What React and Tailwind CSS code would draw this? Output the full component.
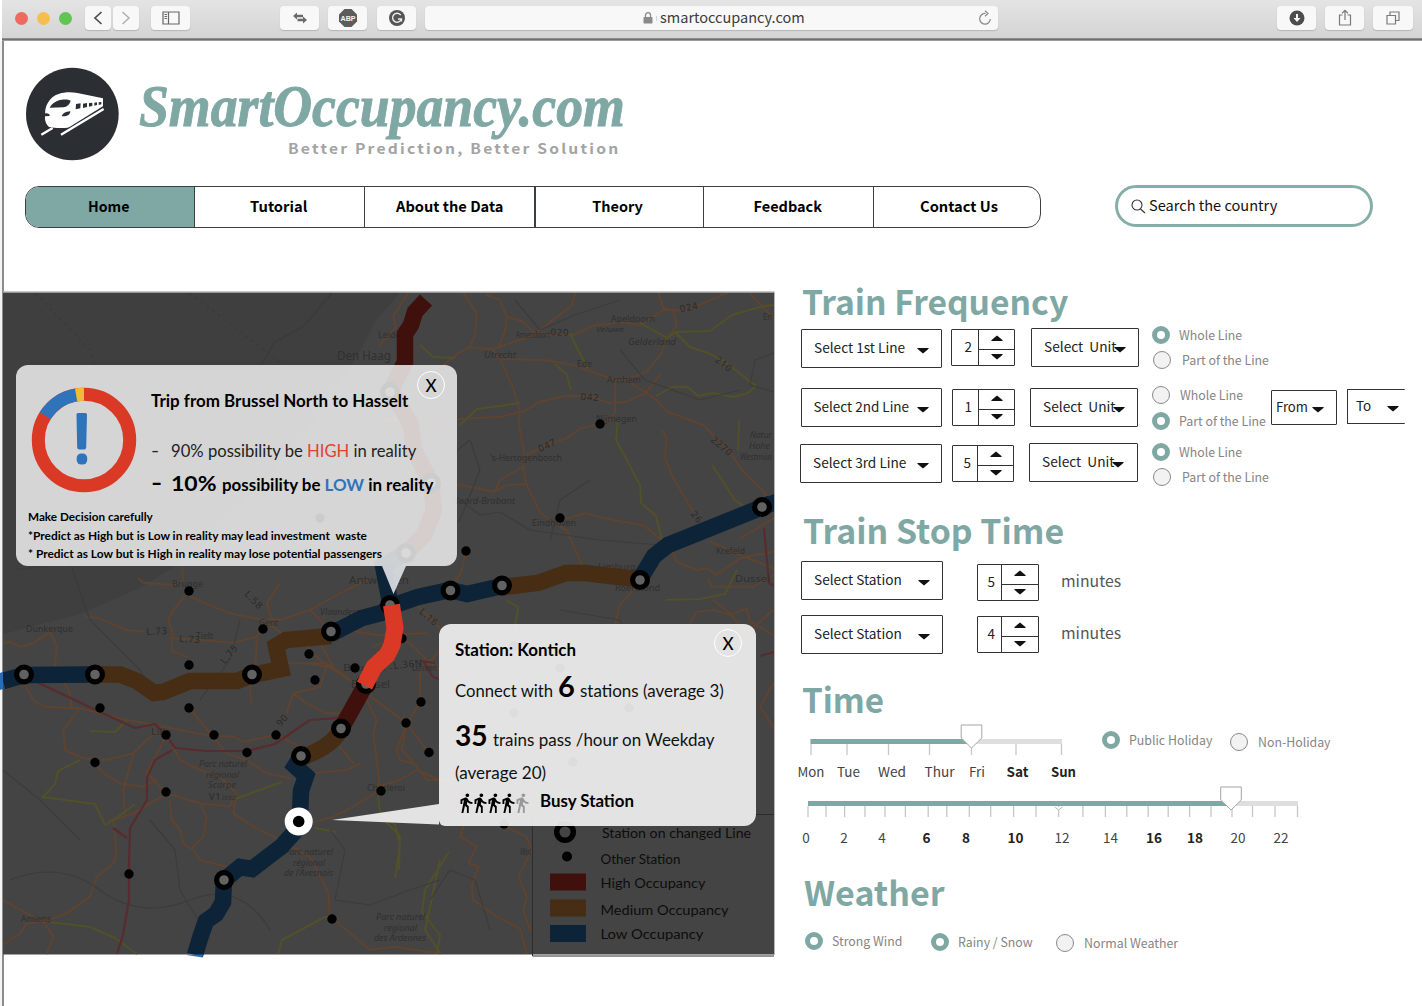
import React, { useLayoutEffect, useRef } from "react";
import { MdDirectionsWalk } from "react-icons/md";

const SOURCE = "font-['Noto_Sans_CJK_SC','Noto_Sans',sans-serif]";

/* Text stretched or squeezed horizontally to a given width */
function Fit({ w, className = "", children }) {
  const ref = useRef(null);
  useLayoutEffect(() => {
    const el = ref.current;
    el.style.transform = "none";
    el.style.transform = `scaleX(${w / el.offsetWidth})`;
  }, [w]);
  return (
    <span className={`inline-block whitespace-pre ${className}`} style={{ width: w }}>
      <span ref={ref} className="inline-block origin-left whitespace-pre">{children}</span>
    </span>
  );
}

function BarButton({ className, children }) {
  return (
    <div className={`flex h-[24px] shrink-0 items-center rounded-[4px] bg-[#f8f8f8] shadow-[0_1px_1px_rgba(0,0,0,0.16)] ${className}`}>
      {children}
    </div>
  );
}

function BrowserBar() {
  return (
    <div className="h-[41px] pl-[2px]">
      <div className="flex h-[38px] items-start bg-gradient-to-b from-[#e4e4e4] to-[#d4d4d4] pt-[6px] pl-[13px]">
        <div className="mt-[6px] flex gap-[9px]">
          <span className="size-[13px] rounded-full bg-[#ed6a5e]" />
          <span className="size-[13px] rounded-full bg-[#f5bf4f]" />
          <span className="size-[13px] rounded-full bg-[#61c554]" />
        </div>
        <BarButton className="ml-[13px] w-[26px] justify-center">
          <svg width="10" height="14" fill="none" stroke="#4d4d4d" strokeWidth="1.7"><path d="M8.500 1L2 7l6.500 6" /></svg>
        </BarButton>
        <BarButton className="ml-[2px] w-[26px] justify-center">
          <svg width="10" height="14" fill="none" stroke="#b0b0b0" strokeWidth="1.500"><path d="M1.500 1L8 7l-6.500 6" /></svg>
        </BarButton>
        <BarButton className="ml-[12px] w-[39px] justify-center">
          <svg width="18" height="14" fill="none" stroke="#666" strokeWidth="1.200"><path d="M1 1h16v12H1zM6.500 1v12M2.500 3.500h2.500M2.500 5.500h2.500M2.500 7.500h2.500" /></svg>
        </BarButton>
        <BarButton className="ml-[90px] w-[39px] justify-center">
          <svg width="16" height="12" fill="#6a6a6a"><path d="M1 4l4-3.500v2.200h6v2.600H5v2.200zM15 8l-4-3.500v2.200H5.500v2.600H11v2.200z" /></svg>
        </BarButton>
        <BarButton className="ml-[9px] w-[39px] justify-center">
          <svg width="18" height="18">
            <path d="M5.500 0h7L18 5.500v7L12.500 18h-7L0 12.500v-7z" fill="#5c5c5c" />
            <text x="9" y="12" textAnchor="middle" textLength="15" lengthAdjust="spacingAndGlyphs" fontSize="8" fontWeight="700" fontFamily="Liberation Sans, sans-serif" fill="#f5f5f5">ABP</text>
          </svg>
        </BarButton>
        <BarButton className="ml-[10px] w-[39px] justify-center">
          <svg width="16" height="16" fill="none">
            <circle cx="8" cy="8" r="8" fill="#555" />
            <path d="M11.800 5.200A4.500 4.500 0 1 0 12.400 9H9M12.400 9v2.500" stroke="#eee" strokeWidth="1.400" />
          </svg>
        </BarButton>
        <BarButton className="ml-[9px] w-[573px] pl-[218px]">
          <svg className="shrink-0" width="10" height="12"><rect x="0.500" y="5" width="9" height="6.500" rx="0.800" fill="#8a8a8a" /><path d="M2.500 5V3.200a2.500 2.500 0 0 1 5 0V5" fill="none" stroke="#8a8a8a" strokeWidth="1.300" /></svg>
          <span className="ml-[3px] h-[5px] w-px bg-gray-300" />
          <Fit w={145} className={`mb-[2px] ml-[3px] text-[14px] leading-[22px] text-[#3c3c3c] ${SOURCE}`}>smartoccupancy.com</Fit>
          <svg className="ml-[173px] shrink-0" width="14" height="16" fill="none" stroke="#888" strokeWidth="1.200"><path d="M7.500 3.500A5.300 5.300 0 1 0 12.300 9M7 0.800l3 2.700-3 2.700" /></svg>
        </BarButton>
        <BarButton className="ml-[279px] w-[39px] justify-center">
          <svg width="16" height="16"><circle cx="8" cy="8" r="7.500" fill="#4d4d4d" /><path d="M7 4h2v4h2.500L8 12 4.500 8H7z" fill="#f5f5f5" /></svg>
        </BarButton>
        <BarButton className="ml-[9px] w-[39px] justify-center">
          <svg width="14" height="18" fill="none" stroke="#7a7a7a" strokeWidth="1.200"><path d="M4.500 6H1.500v10h11V6h-3M7 11V1.500M4 4.300l3-3 3 3" /></svg>
        </BarButton>
        <BarButton className="ml-[9px] w-[40px] justify-center">
          <svg width="14" height="14" fill="none" stroke="#7a7a7a" strokeWidth="1.200"><path d="M1 4.500h8.500V13H1zM4 4.500V1h9v8.500H9.500" /></svg>
        </BarButton>
      </div>
      <div className="h-[3px] border-t border-b border-t-[#8d8d8d] border-b-[#9c9c9c] bg-[#707070]" />
    </div>
  );
}

function TrainLogo() {
  return (
    <svg className="shrink-0" width="94" height="94" viewBox="78 202 282 282">
      <circle cx="217" cy="343" r="139" fill="#2b2e33" />
      <path d="M136 346C132 322 148 290 178 282C192 277 214 276 232 280L309 296V321L220 381C200 387 160 385 147 382C137 374 134 360 135 350L148 349C152 346 146 341 136 341Z" fill="#fff" />
      <path d="M149 324C156 311 168 302 186 300C197 299 207 300 212 303C208 315 202 321 190 323ZM185 350C188 342 196 336 211 335C211 345 202 351 185 350Z" fill="#2b2e33" />
      <path d="M228 313l14-2-1 15-14 3zM249 312l12-2v12l-12 3zM267 310l10-1v10l-10 2zM283 309l8-1v8l-8 2zM296 308l8-1v7l-8 2z" fill="#2b2e33" />
      <path d="M200 390L312 320" stroke="#2b2e33" strokeWidth="4" />
      <path d="M124 405l34-20M183 405l128-77" stroke="#fff" strokeWidth="7" />
    </svg>
  );
}

const NAV = [
  ["Home", 41, "w-[168px] rounded-l-[12px] bg-[#7fa8a4] pr-[3px]"],
  ["Tutorial", 57, "w-[170px] border-l-[1.5px] pr-[3px]"],
  ["About the Data", 107, "w-[169.5px] border-l-[1.5px] pl-[1px]"],
  ["Theory", 51, "w-[169.5px] border-l-[2px] pr-[3px]"],
  ["Feedback", 69, "w-[170px] border-l-[1.5px] pr-[1px]"],
  ["Contact Us", 78, "w-[166px] border-l-[1.5px] pl-[5px]"],
];

function Header() {
  return (
    <header className="h-[245px] pl-[25px] pt-[26px]">
      <div className="flex pl-px">
        <TrainLogo />
        <div className="ml-[19px]">
          <div className="h-[71px] font-['Liberation_Serif',serif] text-[60px] leading-[78px] font-bold italic text-[#7fa8a4] [-webkit-text-stroke:1px_#7fa8a4]">
            <Fit w={486}>SmartOccupancy.com</Fit>
          </div>
          <div className={`ml-[149px] text-[14px] leading-[20px] font-bold tracking-[2px] text-[#a3a3a3] ${SOURCE}`}>
            <Fit w={332}>Better Prediction, Better Solution</Fit>
          </div>
        </div>
      </div>
      <div className="mt-[24px] flex">
        <nav className={`mt-[1px] flex h-[42px] w-[1016px] overflow-hidden rounded-[14px] border-[1.5px] border-[#3c3f41] text-[14.5px] font-bold text-black ${SOURCE}`}>
          {NAV.map(([label, w, cls]) => (
            <div key={label} className={`flex shrink-0 items-center justify-center border-[#3c3f41] pb-[3px] ${cls}`}>
              <Fit w={w} className="leading-[22px]">{label}</Fit>
            </div>
          ))}
        </nav>
        <div className="ml-[74px] flex h-[42px] w-[258px] items-center rounded-[21px] border-[3px] border-[#86aea9] pl-[13px]">
          <svg width="15" height="16" fill="none" stroke="#333" strokeWidth="1.100"><circle cx="6" cy="7" r="5" /><path d="M9.500 11l4.500 4" /></svg>
          <Fit w={128} className={`ml-[3px] mb-[2px] text-[14px] leading-[22px] text-[#111] ${SOURCE}`}>Search the country</Fit>
        </div>
      </div>
    </header>
  );
}

/* ---------- Map ---------- */

const BIG = [[390, 392], [431, 483], [406, 553], [450.5, 590.5], [502, 585.5], [640, 580], [762, 507], [390, 605], [331, 631.5], [252, 674.5], [95, 674.5], [24, 674.5], [341, 728.5], [301, 756], [224, 880], [366, 684]];
const SMALL = [[320, 518], [600, 424], [560, 518], [466, 551], [189, 591], [263, 629], [189, 665], [309, 654], [315, 680], [355, 668], [402, 638.500], [421, 702], [406, 723], [429, 752.500], [381, 791], [100, 708], [166, 735], [189, 708], [214, 735], [247, 752.500], [276, 735], [95, 762.500], [166, 792], [129, 874], [332, 919], [514, 713], [514, 646], [560, 668], [629, 708], [573, 762], [504, 824]];

const PLACES = [
  [337, 360, "Den Haag", 13, 54, 0], [378, 338, "Leiden", 8, 28, 0], [484, 358, "Utrecht", 9, 32, 1], [516, 338, "Amersfoort", 8, 34, 0],
  [611, 322, "Apeldoorn", 8, 44, 0], [596, 331.5, "Veluwe", 7.5, 28, 1], [628, 345, "Gelderland", 8.5, 48, 1], [577, 367, "Ede", 8, 15, 0],
  [607, 383, "Arnhem", 8, 34, 0], [596, 422, "Nijmegen", 8, 41, 0], [490, 461, "'s-Hertogenbosch", 8, 72, 0], [452, 504, "Noord-Brabant", 8.500, 63, 1],
  [532, 526, "Eindhoven", 8, 44, 0], [615, 591, "Roermond", 8, 45, 0], [598, 570, "Limburg", 8, 38, 0], [716, 554, "Krefeld", 8, 29, 0], [735, 582, "Dussel", 9, 35, 0],
  [750, 438, "Natur", 8, 22, 1], [749, 449, "Hohe", 8, 21, 1], [740, 460, "Westmün", 8, 32, 1], [763, 320, "En", 8, 9, 0],
  [349, 584, "Antwerpen", 11, 60, 0], [172, 587, "Brugge", 9, 31, 0], [26, 632, "Dunkerque", 8.500, 47, 0], [259, 626, "Gent", 9, 19, 0],
  [196, 639, "Tielt", 8, 17, 0], [320, 615, "Vlaanderen", 8.500, 45, 1], [343, 671, "Brussel -", 9, 50, 0], [351, 688, "Brussel", 10, 39, 0],
  [412, 671, "Leuven", 8.500, 25, 0], [151, 735, "Lille", 9, 20, 0], [199, 767, "Parc naturel", 8, 48, 1], [206, 778, "régional", 8, 33, 1],
  [208, 788, "Scarpe", 8, 28, 1], [222, 800, "Escaut", 7, 14, 1], [367, 791, "Charleroi", 8.500, 38, 0], [284, 855, "Parc naturel", 8, 49, 1],
  [293, 866, "régional", 8, 32, 1], [284, 876, "de l'Avesnois", 8, 49, 1], [376, 920, "Parc naturel", 8, 49, 1], [384, 931, "regional", 8, 33, 1],
  [374, 941, "des Ardennes", 8, 52, 1], [21, 922, "Amiens", 9, 30, 0], [520, 855, "Wal", 8, 11, 1],
];
const SHIELDS = [
  [560, 332, "020", 2], [689, 307, "024", -12], [590, 397, "042", 3], [547, 445, "047", -25], [724, 364, "210", 38], [722, 446, "2270", 40],
  [697, 517, "26", 50], [157, 631, "L.73", -3], [190, 639, "L.73", 3], [254, 600, "L.58", 45], [229, 654, "L.75", -50], [429, 617, "L.16", 42],
  [408, 664, "L.36N", -6], [282, 720, "90", -50], [215, 796, "V1", 0],
];

function RailMap() {
  return (
    <svg className="block" width="776" height="675" viewBox="0 286 776 675" fill="none">
      <rect x="3" y="292" width="771.500" height="662.500" fill="#444444" />
      <path d="M3 293H400L376 320L357 357L300 440L200 550L140 588L80 614L3 634Z" fill="#3f3f3f" />
      <g stroke="#5e4330" strokeWidth="2" strokeLinejoin="round" strokeLinecap="round">
        {/* northern half */}
        <svg x="0" y="286" width="774" height="668" viewBox="0 286 774 668">
          <g transform="translate(380 285) scale(.33333)" strokeWidth="6">
            <path d="M85 24L40 92L48 125L0 180M250 24L290 85L285 150L270 185L235 205L190 240M270 188L340 192L460 150L575 62L586 24M320 30L360 45L380 95L375 140L355 185M380 95L425 108L465 145L510 150L580 150L640 122L730 112L780 120L850 75L920 76L1040 24M835 24L850 70L880 75L890 120L855 170L845 205L800 260L740 285L705 285L580 240L500 226L360 222L335 190M360 222L400 310L420 380L415 410L432 500L430 550L440 600L480 680L520 715L560 735L605 838M0 405L230 402L360 395L430 380L480 350L560 332L630 334L690 355L740 350L795 325L840 270M705 285V380L690 405L650 420L600 430L560 460L500 480L440 510M740 285L830 345L860 380L930 405L970 420L1050 500L1085 555L1160 630M230 598L345 620L380 600L440 597M345 620L360 585L430 545M545 705L615 685L710 707L790 720L870 785L890 830L950 855L980 850L1010 870L1080 820L1180 800M848 437L860 460L855 520L880 580L940 680M990 770L1080 810L1180 850M260 800L240 870L215 900M780 890L720 960L705 1020M930 1015L950 980L1000 975L1050 990L1100 970L1110 1010L1180 1050M985 880L995 905L1120 905L1180 870M110 960L180 1030M1110 24L1180 100M1080 760L1115 740L1180 700" />
          </g>
          {/* south-east */}
          <g transform="translate(380 600) scale(.33333)" strokeWidth="6">
            <path d="M-20 140L60 110L100 140L150 190L240 250M120 310L80 370L65 450L95 480L140 540L200 540L240 600L250 680L240 710L290 740L265 790L295 800L275 860L280 900L350 950L420 985L440 1060M355 670L440 710L455 750L415 830L440 890L430 930L450 990M1000 0L1050 40L1100 100L1180 30M1180 250L1140 320L1180 380" />
          </g>
        </svg>
        {/* southern half */}
        <g transform="translate(0 560) scale(.33333)" strokeWidth="6">
          <path d="M415 55L430 68L520 75L550 62L545 0M568 92L520 150L505 180L518 220L515 272L560 290M570 110L690 160L790 180L860 230L920 260L960 300L1000 330L1080 380M260 170L300 175L380 210L430 215M510 235L600 240L700 248L770 230L810 175L840 180L930 150L1020 100L1100 60M840 70L800 130L820 190M930 150L980 200L1130 225L1280 220M770 240L765 340L750 380L755 430M12 250L30 245L60 260L100 250L150 215L170 260L165 315L210 400L215 440M60 350L100 420L130 440L240 445L360 475L490 500L620 525L700 530L730 545L830 525L900 560L960 590M570 445L630 520L680 580L740 600L800 640L870 655M235 450L190 510L195 570L250 595L320 600L400 580L440 540L500 495M400 580L370 690L375 770L330 780M285 610L310 640L360 670L430 680L470 660M500 525L540 600L600 630L660 650L710 700L700 760L760 800L830 835L930 890L960 950L985 1000L990 1070L1040 1110L1110 1170L1180 1160L1320 1180M500 525L440 640L500 700L600 730L690 740L700 710M500 700L400 760L340 780L350 880L340 910L290 950L270 1010L200 1060L130 1085L80 1060L12 1022M510 725L515 780L540 810L550 850L580 870L600 900L680 920M600 730L620 770L610 830L575 865M130 1085L80 1090L60 1120L12 1152M130 1085L160 1130L140 1180M870 240L840 290L870 310L980 310L1040 350L1090 400L1130 480L1120 520L1130 600L1140 690L1060 740L1000 770L930 790M920 310L980 320L960 380L880 400L860 460M880 400L920 430L980 460L1020 460M1100 400L1180 460L1220 490L1280 570M1220 490L1190 570L1200 600L1240 610M1080 610L1040 630L940 640M1130 680L1200 660L1250 630L1320 660M960 250L1000 320M1020 560L1060 610M1260 420L1260 340L1320 270" />
        </g>
      </g>
      <g stroke="#525028" strokeWidth="2" strokeLinejoin="round">
        <path d="M640 323L667 338L675 332L710 331L732 315L764 306L774 305M676 333L690 347L708 353L724 361L756 386L748 393L733 397L713 393L698 396L688 387H672L656 396M570 333L578 350L588 368M420 345L433 357L455 358M555 364L567 375L571 390M460 425L477 409L520 403M618 420L616 440L640 485L641 503L656 516L662 540M712 465L735 500L752 512M506 600L518 607L515 628M739 420L738 450M666 600L700 599L725 594L737 570" />
        <path d="M80 760L58 771L55 784L43 797L95 804L105 825L115 819L135 804M90 731L115 732L127 720M235 799L282 782M50 922L90 927L115 938L137 954M278 954L282 940L325 917L333 917M378 795L380 812L395 825L400 845L395 878M315 828L336 832M440 860L425 930L440 953M449 852L425 890L422 912L440 935L437 953M386 822L400 836L399 870" />
      </g>
      <g stroke="#592b2e" strokeWidth="2.200" strokeLinejoin="round">
        <path d="M24 676L60 693L100 712L135 728L155 724L166 735L175 748L206 751L247 751L275 744L310 720L340 718M172 750L155 760L147 778L147 800L130 828L129 865L129 900L123 935L117 954M113 828L127 838M764 528L769 583L774 586M424 662L432 676L445 682M420 661L435 663M760 656L774 652" />
      </g>
      <g stroke="#393939" strokeWidth="1.200" strokeLinejoin="round" opacity=".75">
        <path d="M332 293L304 326L275 342L260 367M10 880Q60 860 100 890T190 900T270 930M150 820L175 850L180 890L210 940M15 570L70 562L90 620L140 670L160 700M420 480L470 440L480 470L460 520L430 540M515 300L540 330L575 315L620 300M620 350L645 380L700 400L740 390M560 610L620 620L640 660M430 900L450 870L475 880L490 930M590 480L560 500L550 540M670 700L710 740L750 745M330 830L345 850L335 900L370 905L410 890L440 880M774 353L755 360L750 385L774 392M460 500L480 515L500 512L530 530L600 540L660 545M3 770L40 800L80 840M200 700L230 660L240 620" />
        <path d="M35 293L90 350L110 410M190 293L290 370L340 420" strokeDasharray="3 4" />
      </g>
      <g fill="#303030" fontFamily="Noto Sans, sans-serif">
        {PLACES.map(([x, y, t, s, w, it], i) => (
          <text key={i} x={x} y={y} fontSize={s} textLength={w} lengthAdjust="spacingAndGlyphs" fontStyle={it ? "italic" : "normal"}>{t}</text>
        ))}
        {SHIELDS.map(([x, y, t, r], i) => (
          <text key={i} x={x} y={y} fill="#2a2a2a" fontSize="9.500" letterSpacing="0.800" textAnchor="middle" dominantBaseline="central" transform={`rotate(${r} ${x} ${y})`}>{t}</text>
        ))}
      </g>

      {/* railway lines */}
      <g strokeWidth="16.500" strokeLinejoin="miter">
        <path d="M426 300L415 312L411 325L405 334V362L391 390L411 425L414 450L431 483L434 510L424 535L406 553" stroke="#40100c" />
        <path d="M406 553L383 566L390 602" stroke="#0d2337" />
        <path d="M3 681L24 675L95 674.500" stroke="#0d2337" />
        <path d="M0 673V690L3 689V672Z" fill="#2a6db5" />
        <path d="M95 674.500H120L137 681L154 693L163 692L190 681H215L237 681L252 675L281 669L276 646L286 640L331 636" stroke="#472d13" />
        <path d="M331 634L362 618L381 613L392 606L418 597L450 590L467 594L502 586" stroke="#0d2337" />
        <path d="M502 587L538 583L566 573L586 573L610 576L640 579" stroke="#472d13" />
        <path d="M640 579L654 556L668 545L760 508L771 503.500" stroke="#0d2337" />
        <path d="M768 496.500L774 494V511L768 513Z" fill="#0d2337" />
        <path d="M366 684L341 729" stroke="#40100c" />
        <path d="M341 728Q335 745 303 757" stroke="#472d13" />
        <path d="M301 756L295 766L306 776L301 791L300 816L297 829L282 846L252 869L240 867L224 880L223 902L216 914L206 921L201 935L195 955" stroke="#0d2337" />
        <path d="M187 954.500H203L202.500 957.500L186.500 955Z" fill="#2a6db5" />
      </g>
      <path d="M774.500 292V955" stroke="#b5b5b5" />
      <path d="M3 292H774.500" stroke="#b5b5b5" strokeWidth="1.500" />
      {SMALL.map(([x, y], i) => <circle key={i} cx={x} cy={y} r="4.700" fill="#000" />)}
      {BIG.map(([x, y], i) => <circle key={i} cx={x} cy={y} r="7.400" fill="#626262" stroke="#000" strokeWidth="5.200" />)}
      <path d="M391.500 605L395 628L392 645L387 655L374 667L364.500 685.500" stroke="#da3926" strokeWidth="17" />
      <circle cx="298.700" cy="821.500" r="14" fill="#fff" /><circle cx="298.700" cy="821.500" r="5.800" fill="#000" />

      {/* legend */}
      <path d="M774 814.500H532.500V956H774" stroke="#2c2c2c" strokeWidth="1" />
      <circle cx="565" cy="832" r="8.300" fill="#444" stroke="#000" strokeWidth="5.500" />
      <circle cx="567" cy="856.500" r="5" fill="#000" />
      <rect x="550" y="873.500" width="36" height="17" fill="#40100c" />
      <rect x="550" y="899.500" width="36" height="17" fill="#472d13" />
      <rect x="550" y="925" width="36" height="17" fill="#0d2337" />
      <g fill="#0d0d0d" fontFamily="Lato, sans-serif" fontSize="13.500">
        <text x="602" y="838" textLength="149" lengthAdjust="spacingAndGlyphs">Station on changed Line</text>
        <text x="600.500" y="864" textLength="80" lengthAdjust="spacingAndGlyphs">Other Station</text>
        <text x="600.500" y="888" textLength="105" lengthAdjust="spacingAndGlyphs">High Occupancy</text>
        <text x="600.500" y="915" textLength="128" lengthAdjust="spacingAndGlyphs">Medium Occupancy</text>
        <text x="600.500" y="939" textLength="103" lengthAdjust="spacingAndGlyphs">Low Occupancy</text>
      </g>

      {/* pointers of the two call-outs */}
      <path d="M382 566H406L393.500 594Z" fill="#dce0e4" fillOpacity=".92" />
      <path d="M439 804L332 820L439 824.500Z" fill="#f5f5f5" fillOpacity=".9" />
    </svg>
  );
}

function Close() {
  return (
    <div className="flex size-[28px] items-center justify-center rounded-full border-[1.5px] border-white font-['Lato',sans-serif] text-[17px] leading-none font-medium text-black">
      <Fit w={11}>X</Fit>
    </div>
  );
}

function TripPopup() {
  return (
    <section className="absolute top-[79px] left-[16px] h-[201px] w-[441px] rounded-[12px] bg-[#f0f0f0]/85 pl-[12px] font-['Lato',sans-serif] text-black">
      <div className="absolute top-[6px] right-[12px]"><Close /></div>
      <div className="flex h-[143px]">
        <svg className="mt-[22px] ml-[3px] shrink-0" width="106" height="106" viewBox="-53 -53 106 106" fill="none">
          <circle r="45.700" stroke="#da3926" strokeWidth="13" />
          <path d="M-38.750 -24.200A45.700 45.700 0 0 1 -7.500 -45.080" stroke="#2f74ba" strokeWidth="13" />
          <path d="M-7.900 -45A45.700 45.700 0 0 1 0 -45.700" stroke="#f0bb3c" strokeWidth="13" />
          <path d="M-7.500 -25.500q0-1.500 1.500-1.500h7.500q1.500 0 1.500 1.500l-.8 33q-.2 2-2 2h-5q-1.800 0-2-2z" fill="#2f74ba" />
          <rect x="-7.300" y="13.500" width="10.500" height="11" rx="4.500" fill="#2f74ba" />
        </svg>
        <div className="ml-[14px] pt-[24px]">
          <Fit w={257} className="block h-[20px] text-[16.5px] leading-[20px] font-bold">Trip from Brussel North to Hasselt</Fit>
          <div className="mt-[27px] flex h-[22px] items-center text-[16.5px] leading-[22px] text-[#222]">
            <Fit w={8} className="mr-[12px]">-</Fit>
            <Fit w={245}>90% possibility be <span className="text-[#e2412f]">HIGH</span> in reality</Fit>
          </div>
          <div className="mt-[6px] flex h-[30px] items-baseline text-[17px] leading-[30px] font-bold">
            <Fit w={11} className="mr-[9px] text-[22px]">-</Fit>
            <Fit w={46} className="mr-[5px] text-[21px]">10%</Fit>
            <Fit w={212}>possibility be <span className="text-[#2f74ba]">LOW</span> in reality</Fit>
          </div>
        </div>
      </div>
      <div className="text-[12px] leading-[18.5px] font-bold">
        <Fit w={125} className="block h-[18.5px]">Make Decision carefully</Fit>
        <Fit w={339} className="block h-[18.5px]">*Predict as High but is Low in reality may lead investment  waste</Fit>
        <Fit w={354} className="block h-[18.5px]">* Predict as Low but is High in reality may lose potential passengers</Fit>
      </div>
    </section>
  );
}

function StationPopup() {
  return (
    <section className="absolute top-[338px] left-[439px] h-[202px] w-[317px] rounded-[12px] rounded-bl-[6px] bg-[#f5f5f5]/90 pt-[14px] pl-[16px] font-['Lato',sans-serif] text-[16.5px] text-black">
      <div className="absolute top-[5px] right-[14px]"><Close /></div>
      <Fit w={121} className="block h-[20px] leading-[20px] font-bold">Station: Kontich</Fit>
      <div className="mt-[3px] flex h-[44px] items-baseline leading-[40px] text-[#111]">
        <Fit w={98}>Connect with</Fit>
        <Fit w={17} className="mr-[5px] ml-[5px] text-[29px] font-bold text-black">6</Fit>
        <Fit w={144}>stations (average 3)</Fit>
      </div>
      <div className="mt-[5px] flex h-[40px] items-baseline leading-[40px] text-[#111]">
        <Fit w={33} className="mr-[5px] text-[29px] font-bold text-black">35</Fit>
        <Fit w={221}>trains pass /hour on Weekday</Fit>
      </div>
      <Fit w={91} className="mt-[6px] block h-[24px] leading-[24px] text-[#111]">(average 20)</Fit>
      <div className="mt-[6px] flex h-[22px] items-center">
        {[0, 1, 2, 3, 4].map((i) => (
          <MdDirectionsWalk key={i} size={22} className={i < 4 ? "-mr-[8px]" : "text-[#999]"} />
        ))}
        <Fit w={94} className="mb-[3px] ml-[7px] leading-[20px] font-bold">Busy Station</Fit>
      </div>
    </section>
  );
}

/* ---------- Controls ---------- */

const BOX = "flex shrink-0 rounded-[1px] border-[1.5px] border-[#333]";

function Caret({ className = "" }) {
  return <svg className={`shrink-0 ${className}`} width="12" height="6" fill="#111"><path d="M0 0H12L10.500 1.800L6 5.500L1.500 1.800Z" /></svg>;
}

function Select({ className, label, w, caret = "" }) {
  return (
    <div className={`${BOX} items-center text-[13.5px] leading-[20px] text-[#222] ${className}`}>
      <Fit w={w} className="mb-[3px]">{label}</Fit>
      <Caret className={caret} />
    </div>
  );
}

function Spinner({ className, value, left }) {
  return (
    <div className={`${BOX} h-[37px] ${className}`}>
      <div className={`flex items-center justify-end border-r-[1.5px] border-[#333] pr-[6px] pb-[3px] text-[13.5px] leading-[20px] text-[#222] ${left}`}>{value}</div>
      <div className="flex flex-1 flex-col">
        <div className="flex flex-1 items-center justify-center border-b-[1.5px] border-[#333] pb-[3px]"><Caret className="rotate-180" /></div>
        <div className="flex flex-1 items-center justify-center"><Caret /></div>
      </div>
    </div>
  );
}

function Radio({ on, label, w, className = "" }) {
  return (
    <div className={`flex h-[18px] items-center ${className}`}>
      <span className={on ? "size-[18px] rounded-full border-[5px] border-[#7fa8a4]" : "size-[18px] rounded-full border-[1.5px] border-[#8a8a8a] bg-[#f2f2f2]"} />
      <Fit w={w} className="ml-[9px] text-[12.5px] leading-[18px] text-[#858585]">{label}</Fit>
    </div>
  );
}

function Title({ w, className, children }) {
  return <h2 className={`h-[34px] text-[34px] leading-[30px] font-bold text-[#7fa8a4] ${className}`}><Fit w={w}>{children}</Fit></h2>;
}

function Slider({ className, width, x0, xEnd, handle, ticks, labels, labelDrop, y, note }) {
  const top = y - 16;
  return (
    <svg className={`block shrink-0 ${className}`} width={width} height="62" viewBox={`790 ${top} ${width} 62`} fill="none">
      <path d={`M${x0} ${y + 2.500}H${xEnd}`} stroke="#dedede" strokeWidth="5" />
      <path d={`M${x0} ${y + 2.500}H${handle}`} stroke="#7fa8a4" strokeWidth="5" />
      {ticks.map((x) => <path key={x} d={`M${x} ${y + 5}V${y + 16}`} stroke="#c6c6c6" strokeWidth="1.300" />)}
      {note && <path d={`M${note - 4} ${y + 6}l4 3 4-3`} stroke="#bbb" fill="#fff" />}
      <path d={`M${handle - 10.300} ${y - 14}h20.600v13l-10.300 10-10.300-10z`} fill="#fff" stroke="#a5a5a5" />
      <g fontFamily="Noto Sans CJK SC, sans-serif" fontSize="13.500" fill="#444" textAnchor="middle">
        {labels.map(([t, x, w, bold]) => (
          <text key={t} x={x} y={y + labelDrop} textLength={w} lengthAdjust="spacingAndGlyphs" fontWeight={bold ? 700 : 400} fill={bold ? "#222" : "#444"}>{t}</text>
        ))}
      </g>
    </svg>
  );
}

const DAYS = [["Mon", 811, 27], ["Tue", 848.500, 23], ["Wed", 892, 28], ["Thur", 939.500, 30], ["Fri", 977, 16], ["Sat", 1017.500, 22, 1], ["Sun", 1063.500, 25, 1]];
const HOURS = [["0", 806, 7.500], ["2", 844, 7.500], ["4", 882, 7.500], ["6", 926.500, 8, 1], ["8", 966, 8, 1], ["10", 1015.500, 16, 1], ["12", 1062, 15], ["14", 1110.500, 15], ["16", 1154, 16, 1], ["18", 1195, 16, 1], ["20", 1238, 15], ["22", 1281, 15]];
const HOUR_TICKS = [808, 826, 844.600, 865, 885, 905.400, 928.200, 946.800, 969.300, 990.700, 1013.600, 1036, 1058.600, 1082.900, 1105.400, 1126.800, 1148.200, 1168.200, 1189.600, 1211, 1232, 1252.500, 1275, 1297.500];

function Controls() {
  return (
    <div className={`h-[720px] w-[642px] pl-[24px] ${SOURCE}`}>
      <Title w={266} className="ml-[2px]">Train Frequency</Title>
      <div className="mt-[6px] flex h-[60px] items-start">
        <Select className="mt-[3px] ml-[1px] h-[39px] w-[141px] pl-[11.5px]" label="Select 1st Line" w={91} caret="ml-[12px] mt-[4px]" />
        <Spinner className="mt-[3px] ml-[9px] w-[64px]" value="2" left="w-[27px]" />
        <Select className="mt-[2px] ml-[16px] h-[39px] w-[108px] pl-[12px]" label="Select  Unit" w={72} caret="mt-[4px] -ml-[2px]" />
        <div className="ml-[13px]">
          <Radio on label="Whole Line" w={63} />
          <Radio label="Part of the Line" w={87} className="mt-[7px] ml-[1px] [&>span:last-child]:ml-[11px]" />
        </div>
      </div>
      <div className="flex h-[57px] items-start">
        <Select className="mt-[2px] ml-[1px] h-[39px] w-[141px] pl-[11.5px]" label="Select 2nd Line" w={96} caret="ml-[7px] mt-[4px]" />
        <Spinner className="mt-[3px] ml-[10px] w-[63px]" value="1" left="w-[26px]" />
        <Select className="mt-[2px] ml-[15px] h-[39px] w-[108px] pl-[12px]" label="Select  Unit" w={72} caret="mt-[4px] -ml-[2px]" />
        <div className="ml-[14px]">
          <Radio label="Whole Line" w={63} className="[&>span:last-child]:ml-[10px]" />
          <Radio on label="Part of the Line" w={87} className="mt-[8px]" />
        </div>
        <Select className="mt-[4px] ml-[5px] h-[35px] w-[66px] pl-[4px]" label="From" w={32} caret="mt-[4px] ml-[4px]" />
        <Select className="mt-[3px] ml-[10px] h-[35px] w-[58px] border-r-0 pl-[8px]" label="To" w={15} caret="mt-[4px] ml-[16px]" />
      </div>
      <div className="flex h-[72px] items-start">
        <Select className="mt-[1px] h-[39px] w-[142px] pl-[11.5px]" label="Select 3rd Line" w={93} caret="ml-[11px] mt-[4px]" />
        <Spinner className="mt-[2px] ml-[10px] w-[62px]" value="5" left="w-[25px]" />
        <Select className="ml-[15px] h-[39px] w-[109px] pl-[12px]" label="Select  Unit" w={72} caret="mt-[4px] -ml-[2px]" />
        <div className="ml-[14px]">
          <Radio on label="Whole Line" w={63} />
          <Radio label="Part of the Line" w={87} className="mt-[7px] ml-[1px] [&>span:last-child]:ml-[11px]" />
        </div>
      </div>

      <Title w={261} className="ml-[3px]">Train Stop Time</Title>
      <div className="mt-[12px] flex h-[54px] items-start">
        <Select className="ml-[1px] h-[39px] w-[142px] pl-[11.5px]" label="Select Station" w={88} caret="ml-[16px] mt-[4px]" />
        <Spinner className="mt-[3px] ml-[34px] w-[62px]" value="5" left="w-[24px]" />
        <Fit w={60} className="mt-[9px] ml-[22px] text-[15px] leading-[22px] text-[#555]">minutes</Fit>
      </div>
      <div className="flex h-[69px] items-start">
        <Select className="ml-[1px] h-[39px] w-[142px] pl-[11.5px]" label="Select Station" w={88} caret="ml-[16px] mt-[4px]" />
        <Spinner className="mt-px ml-[34px] w-[62px]" value="4" left="w-[24px]" />
        <Fit w={60} className="mt-[7px] ml-[22px] text-[15px] leading-[22px] text-[#555]">minutes</Fit>
      </div>

      <Title w={82} className="ml-[2px]">Time</Title>
      <div className="mt-[5px] flex">
        <Slider className="-ml-[10px]" width={312} y={738.500} x0={810.500} xEnd={1062} handle={971.500} ticks={[811, 847, 888.500, 929.500, 971.500, 1016, 1061.500]} labels={DAYS} labelDrop={37.5} />
        <div className="flex items-start pt-[8px]">
          <Radio on label="Public Holiday" w={83} />
          <Radio label="Non-Holiday" w={73} className="mt-[2px] ml-[18px] [&>span:last-child]:ml-[10px]" />
        </div>
      </div>
      <Slider className="-ml-[10px]" width={530} y={800.500} x0={808} xEnd={1298} handle={1231} ticks={HOUR_TICKS} labels={HOURS} labelDrop={42} note={1058.600} />

      <Title w={141} className="mt-[30px] ml-[4px]">Weather</Title>
      <div className="mt-[21px] ml-[5px] flex items-start">
        <Radio on label="Strong Wind" w={70} />
        <Radio on label="Rainy / Snow" w={75} className="mt-px ml-[29px]" />
        <Radio label="Normal Weather" w={94} className="mt-[2px] ml-[23px] [&>span:last-child]:ml-[10px]" />
      </div>
    </div>
  );
}

export default function App() {
  return (
    <div className="h-[1006px] w-[1422px] overflow-hidden bg-white">
      <BrowserBar />
      <div className="flex h-[965px]">
        <div className="-mr-[4px] w-[4px] shrink-0 border-r-[2px] border-[#8c8c8c] bg-[#f4f4f4]" />
        <div className="w-[1422px] shrink-0">
          <Header />
          <main className="flex">
            <div className="relative w-[776px] shrink-0">
              <RailMap />
              <TripPopup />
              <StationPopup />
            </div>
            <Controls />
          </main>
        </div>
      </div>
    </div>
  );
}
